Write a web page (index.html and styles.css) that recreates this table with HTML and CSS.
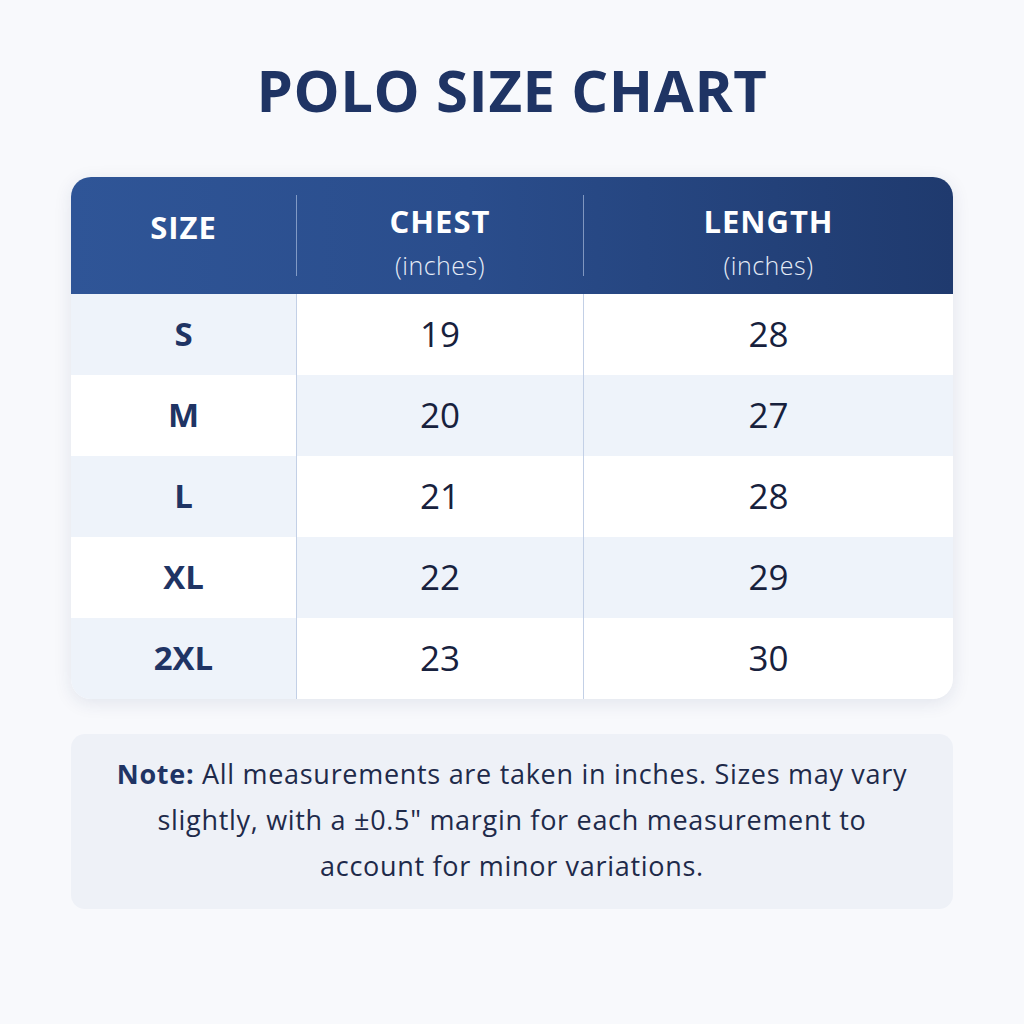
FILE: index.html
```html
<!DOCTYPE html>
<html lang="en">
<head>
    <meta charset="UTF-8">
    <meta name="viewport" content="width=device-width, initial-scale=1.0">
    <title>Polo Size Chart</title>
    <link rel="stylesheet" href="styles.css">
</head>
<body>

    <h1>POLO SIZE CHART</h1>

    <div class="chart">
        <div class="row head">
            <div class="cell size">SIZE</div>
            <div class="cell chest">CHEST<span>(inches)</span></div>
            <div class="cell length">LENGTH<span>(inches)</span></div>
        </div>
        <div class="row odd">
            <div class="cell size">S</div>
            <div class="cell chest">19</div>
            <div class="cell length">28</div>
        </div>
        <div class="row even">
            <div class="cell size">M</div>
            <div class="cell chest">20</div>
            <div class="cell length">27</div>
        </div>
        <div class="row odd">
            <div class="cell size">L</div>
            <div class="cell chest">21</div>
            <div class="cell length">28</div>
        </div>
        <div class="row even">
            <div class="cell size">XL</div>
            <div class="cell chest">22</div>
            <div class="cell length">29</div>
        </div>
        <div class="row odd">
            <div class="cell size">2XL</div>
            <div class="cell chest">23</div>
            <div class="cell length">30</div>
        </div>
    </div>

    <div class="note">
        <p><b>Note:</b> All measurements are taken in inches. Sizes may vary<br>
        slightly, with a ±0.5" margin for each measurement to<br>
        account for minor variations.</p>
    </div>

</body>
</html>
```

FILE: styles.css
```css
body {
    margin: 0;
    padding: 0 71px;
    font-family: "Open Sans", "Noto Sans", sans-serif;
    background: #f8f9fc;
    color: #1b2a4e;
}
h1 {
    margin: 0;
    padding: 60px 0 57px;
    text-align: center;
    font-size: 58px;
    font-weight: 700;
    letter-spacing: 0.6px;
    line-height: 60px;
    color: #1f3464;
}
.chart {
    background: #fff;
    border-radius: 20px;
    overflow: hidden;
    box-shadow: 0 4px 18px rgba(30, 50, 100, 0.10);
}
.row {
    display: grid;
    grid-template-columns: 226px 287px 1fr;
    height: 81px;
}
.cell {
    display: flex;
    flex-direction: column;
    align-items: center;
    justify-content: center;
    font-size: 35px;
    color: #17213d;
    padding-bottom: 2px;
    box-sizing: border-box;
}
.cell.size {
    font-weight: 700;
    font-size: 33px;
    color: #1f3464;
    border-right: 1px solid #c3d0e6;
}
.cell.chest {
    border-right: 1px solid #c3d0e6;
}
.odd .size,
.even .chest,
.even .length {
    background: #eef3fa;
}
.row.head {
    height: 117px;
    background: linear-gradient(90deg, #2f5597 0%, #2a4d8c 45%, #1f3a6e 100%);
}
.head .cell {
    color: #fff;
    font-weight: 700;
    font-size: 31px;
    letter-spacing: 1px;
    background: none;
    line-height: 40px;
    margin: 18px 0;
    height: 81px;
    padding: 6px 0 0;
    justify-content: flex-start;
}
.head .cell.size {
    justify-content: center;
    padding: 0 0 18px;
}
.head .cell.size,
.head .cell.chest {
    border-right: 1px solid rgba(200, 215, 240, 0.55);
}
.head .cell span {
    font-weight: 300;
    font-size: 25px;
    letter-spacing: 0.5px;
    line-height: 48px;
    color: #e6ecf7;
}
.note {
    margin-top: 35px;
    background: #eef1f7;
    border-radius: 14px;
    height: 175px;
    display: flex;
    align-items: center;
    justify-content: center;
}
.note p {
    margin: 0;
    padding-bottom: 4px;
    text-align: center;
    font-size: 27px;
    letter-spacing: 0.7px;
    line-height: 46px;
    color: #1e2a4a;
}
.note b {
    color: #1f3464;
    font-weight: 700;
}
```
